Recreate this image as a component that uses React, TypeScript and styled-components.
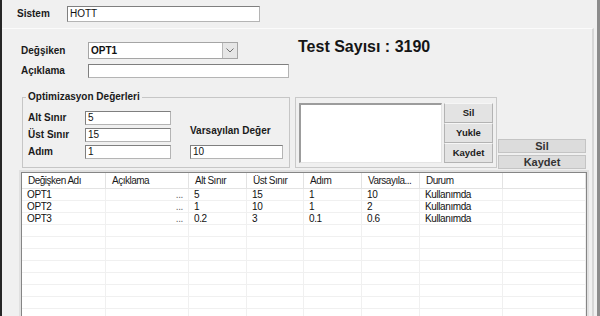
import styled, { createGlobalStyle } from "styled-components";

const FONT = `"Liberation Sans", Arial, sans-serif`;
const COLS = "84px 83px 58px 57px 58px 58px 83px 1fr";

const GlobalStyle = createGlobalStyle`
	html, body {
		margin: 0;
		padding: 0;
		background: #f0f0f0;
	}
	body {
		font-family: ${FONT};
		color: #111;
	}
	* {
		box-sizing: border-box;
	}
`

const Window = styled.div`
	width: 600px;
	height: 316px;
	display: flex;
	flex-direction: column;
	overflow: hidden;
	background: #f0f0f0;
	border-left: 2px solid #262626;
	border-right: 3px solid #8c8c8c;
`

const TopBar = styled.div`
	height: 28px;
	display: flex;
	align-items: center;
	padding-left: 15px;
`

const Label = styled.span<{ $w?: number }>`
	width: ${p => (p.$w ? `${p.$w}px` : "auto")};
	font: bold 10px/12px ${FONT};
	color: #1a1a1a;
	white-space: nowrap;
`

const TextBox = styled.div<{ $w: number; $h: number }>`
	width: ${p => p.$w}px;
	height: ${p => p.$h}px;
	background: #fff;
	border: 1px solid #b4b4b4;
	border-top-color: #7f7f7f;
	border-left-color: #7f7f7f;
	padding-left: 2px;
	font: 10px/${p => p.$h - 2}px ${FONT};
	color: #111;
`

const Panel = styled.div`
	flex: 1;
	min-height: 0;
	width: 592px;
	display: flex;
	flex-direction: column;
	border-top: 1px solid #fbfbfb;
	border-right: 2px solid #d6d6d6;
`

const HeadRow = styled.div`
	display: flex;
	align-items: flex-start;
	margin: 11px 0 0 19px;
`

const FormGrid = styled.div`
	display: grid;
	grid-template-columns: 67px auto;
	row-gap: 5px;
	align-items: center;
	padding-top: 2px;
`

const Combo = styled.div`
	width: 150px;
	height: 17px;
	display: flex;
	background: #fff;
	border: 1px solid #a5a5a5;
`

const ComboText = styled.span`
	flex: 1;
	padding-left: 2px;
	font: bold 10px/15px ${FONT};
`

const ComboButton = styled.span`
	width: 15px;
	display: flex;
	align-items: center;
	justify-content: center;
	background: #e6e6e6;
	border-left: 1px solid #b8b8b8;
`

const TestTitle = styled.div`
	margin: -2px 0 0 9px;
	font: bold 16px/18px ${FONT};
	color: #151515;
`

const OptionsRow = styled.div`
	display: flex;
	align-items: flex-start;
	margin: 13px 0 0 20px;
`

const GroupBox = styled.fieldset`
	width: 268px;
	height: 77px;
	min-width: 0;
	margin: 0;
	padding: 0 0 0 5px;
	border: 1px solid #c6c6c6;
`

const GroupCaption = styled.legend`
	margin-left: -2px;
	padding: 0 2px;
	font: bold 10px/12px ${FONT};
	color: #1a1a1a;
`

const ValuesGrid = styled.div`
	display: grid;
	grid-template-columns: 57px 105px 93px;
	grid-template-rows: 14px 14px 14px;
	row-gap: 3px;
	align-items: center;
	margin-top: 8px;
`

const DefaultLabel = styled(Label)`
	grid-column: 3;
	grid-row: 2;
	align-self: start;
	margin-top: -3px;
`

const DefaultBox = styled(TextBox)`
	grid-column: 3;
	grid-row: 3;
`

const ListPanel = styled.div`
	width: 202px;
	height: 71px;
	margin: 6px 0 0 5px;
	padding: 5px 0 0 3px;
	display: flex;
	gap: 2px;
	border: 1px solid #c9c9c9;
`

const ListBox = styled.div`
	width: 143px;
	height: 60px;
	background: #fff;
	border-top: 2px solid #9c9c9c;
	border-left: 2px solid #9c9c9c;
	border-right: 1px solid #e4e4e4;
	border-bottom: 1px solid #e4e4e4;
`

const SmallStack = styled.div`
	width: 49px;
	display: flex;
	flex-direction: column;
`

const SmallButton = styled.div`
	height: 20px;
	display: flex;
	align-items: center;
	justify-content: center;
	background: #e3e3e3;
	border: 1px solid #b3b3b3;
	border-top-color: #f6f6f6;
	font: bold 9.5px/12px ${FONT};
	color: #1c1c1c;
`

const BigStack = styled.div`
	width: 88px;
	margin: 0 0 -1px 1px;
	align-self: flex-end;
	display: flex;
	flex-direction: column;
	gap: 2px;
`

const BigButton = styled.div`
	height: 14px;
	display: flex;
	align-items: center;
	justify-content: center;
	background: #dcdcdc;
	border: 1px solid #c4c4c4;
	font: bold 11px/12px ${FONT};
	color: #333;
`

const Table = styled.div`
	width: 566px;
	min-height: 160px;
	margin: 4px 0 0 19px;
	flex-shrink: 0;
	background: #fff;
	border: 1px solid #858585;
	box-shadow: 0 0 0 2px #e0e0e0;
`

const HeaderRow = styled.div`
	display: grid;
	grid-template-columns: ${COLS};
	height: 16px;
	border-bottom: 1px solid #e3e3e3;
`

const HeaderCell = styled.div`
	padding-left: 6px;
	font: 10px/15px ${FONT};
	letter-spacing: -0.5px;
	color: #1a1a1a;
	white-space: nowrap;
	overflow: hidden;
	border-right: 1px solid #e3e3e3;
`

const BodyRow = styled.div`
	display: grid;
	grid-template-columns: ${COLS};
	height: 12px;
	border-bottom: 1px solid #f0f0f0;
`

const Cell = styled.div<{ $right?: boolean }>`
	padding: 0 5px;
	text-align: ${p => (p.$right ? "right" : "left")};
	font: 10px/11px ${FONT};
	letter-spacing: -0.4px;
	color: ${p => (p.$right ? "#666" : "#111")};
	white-space: nowrap;
	overflow: hidden;
	border-right: 1px solid #f0f0f0;
`

const headers = ["Değişken Adı", "Açıklama", "Alt Sınır", "Üst Sınır", "Adım", "Varsayıla...", "Durum", ""];

const rows = [
	["OPT1", "5", "15", "1", "10", "Kullanımda"],
	["OPT2", "1", "10", "1", "2", "Kullanımda"],
	["OPT3", "0.2", "3", "0.1", "0.6", "Kullanımda"],
];

const EMPTY_ROWS = 10;

const Chevron = () => (
	<svg width="8" height="5" viewBox="0 0 8 5">
		<polyline points="0.5,0.5 4,4 7.5,0.5" fill="none" stroke="#707070" strokeWidth="1" />
	</svg>
);

export default function App() {
	return <>
		<GlobalStyle />
		<Window>
			<TopBar>
				<Label $w={50}>Sistem</Label>
				<TextBox $w={193} $h={16}>HOTT</TextBox>
			</TopBar>

			<Panel>
				<HeadRow>
					<FormGrid>
						<Label>Değşiken</Label>
						<Combo>
							<ComboText>OPT1</ComboText>
							<ComboButton><Chevron /></ComboButton>
						</Combo>
						<Label>Açıklama</Label>
						<TextBox $w={201} $h={14} />
					</FormGrid>
					<TestTitle>Test Sayısı : 3190</TestTitle>
				</HeadRow>

				<OptionsRow>
					<GroupBox>
						<GroupCaption>Optimizasyon Değerleri</GroupCaption>
						<ValuesGrid>
							<Label>Alt Sınır</Label>
							<TextBox $w={86} $h={14}>5</TextBox>
							<span />
							<Label>Üst Sınır</Label>
							<TextBox $w={86} $h={14}>15</TextBox>
							<DefaultLabel>Varsayılan Değer</DefaultLabel>
							<Label>Adım</Label>
							<TextBox $w={86} $h={14}>1</TextBox>
							<DefaultBox $w={93} $h={14}>10</DefaultBox>
						</ValuesGrid>
					</GroupBox>

					<ListPanel>
						<ListBox />
						<SmallStack>
							<SmallButton>Sil</SmallButton>
							<SmallButton>Yukle</SmallButton>
							<SmallButton>Kaydet</SmallButton>
						</SmallStack>
					</ListPanel>

					<BigStack>
						<BigButton>Sil</BigButton>
						<BigButton>Kaydet</BigButton>
					</BigStack>
				</OptionsRow>

				<Table>
					<HeaderRow>
						{headers.map((h, i) => <HeaderCell key={i}>{h}</HeaderCell>)}
					</HeaderRow>
					{rows.map(r => (
						<BodyRow key={r[0]}>
							<Cell>{r[0]}</Cell>
							<Cell $right>...</Cell>
							<Cell>{r[1]}</Cell>
							<Cell>{r[2]}</Cell>
							<Cell>{r[3]}</Cell>
							<Cell>{r[4]}</Cell>
							<Cell>{r[5]}</Cell>
							<Cell />
						</BodyRow>
					))}
					{Array.from({ length: EMPTY_ROWS }).map((_, i) => (
						<BodyRow key={`e${i}`}>
							{headers.map((_, j) => <Cell key={j} />)}
						</BodyRow>
					))}
				</Table>
			</Panel>
		</Window>
	</>
}
